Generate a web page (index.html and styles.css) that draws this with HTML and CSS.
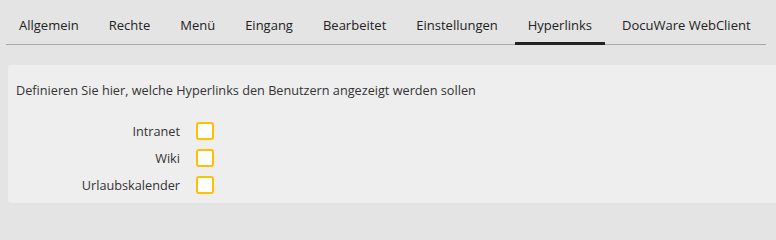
FILE: index.html
```html
<!DOCTYPE html>
<html lang="de">
<head>
<meta charset="utf-8">
<title>Hyperlinks</title>
<link rel="stylesheet" href="styles.css">
</head>
<body>
<nav class="tabs">
  <div class="tab">Allgemein</div>
  <div class="tab">Rechte</div>
  <div class="tab">Menü</div>
  <div class="tab">Eingang</div>
  <div class="tab">Bearbeitet</div>
  <div class="tab">Einstellungen</div>
  <div class="tab active">Hyperlinks</div>
  <div class="tab">DocuWare WebClient</div>
</nav>
<section class="panel">
  <p class="intro">Definieren Sie hier, welche Hyperlinks den Benutzern angezeigt werden sollen</p>
  <div class="form">
    <label class="label" for="c1">Intranet</label>
    <span class="check" id="c1"></span>
    <label class="label" for="c2">Wiki</label>
    <span class="check" id="c2"></span>
    <label class="label" for="c3">Urlaubskalender</label>
    <span class="check" id="c3"></span>
  </div>
</section>
</body>
</html>
```
FILE: styles.css
```css
html, body {
  margin: 0;
  padding: 0;
}
body {
  background: #e4e4e4;
  font-family: "Open Sans", "Liberation Sans", sans-serif;
  font-size: 12.7px;
  line-height: 18px;
  color: #333;
  overflow: hidden;
  height: 211px;
}
.tabs {
  display: flex;
  gap: 4px;
  margin: 0 10px 0 6px;
  border-bottom: 1px solid #a8a8a8;
}
.tab {
  padding: 16px 13px 8px;
  border-bottom: 3px solid transparent;
  margin-bottom: -1px;
  color: #222;
  font-size: 13px;
  white-space: nowrap;
}
.tab.active {
  border-bottom-color: #222;
}
.panel {
  margin: 20px 0 0 8px;
  background: #eeeeee;
  border-radius: 3px 0 0 3px;
  padding: 16px 8px 9px;
  height: 113px;
}
.intro {
  margin: 0 0 23px;
}
.form {
  display: grid;
  grid-template-columns: 164px 18px;
  column-gap: 16px;
  row-gap: 9px;
  align-items: center;
}
.label {
  text-align: right;
}
.check {
  box-sizing: border-box;
  width: 18px;
  height: 18px;
  border: 2px solid #ffc000;
  border-radius: 3px;
  background: #fff;
}
```
